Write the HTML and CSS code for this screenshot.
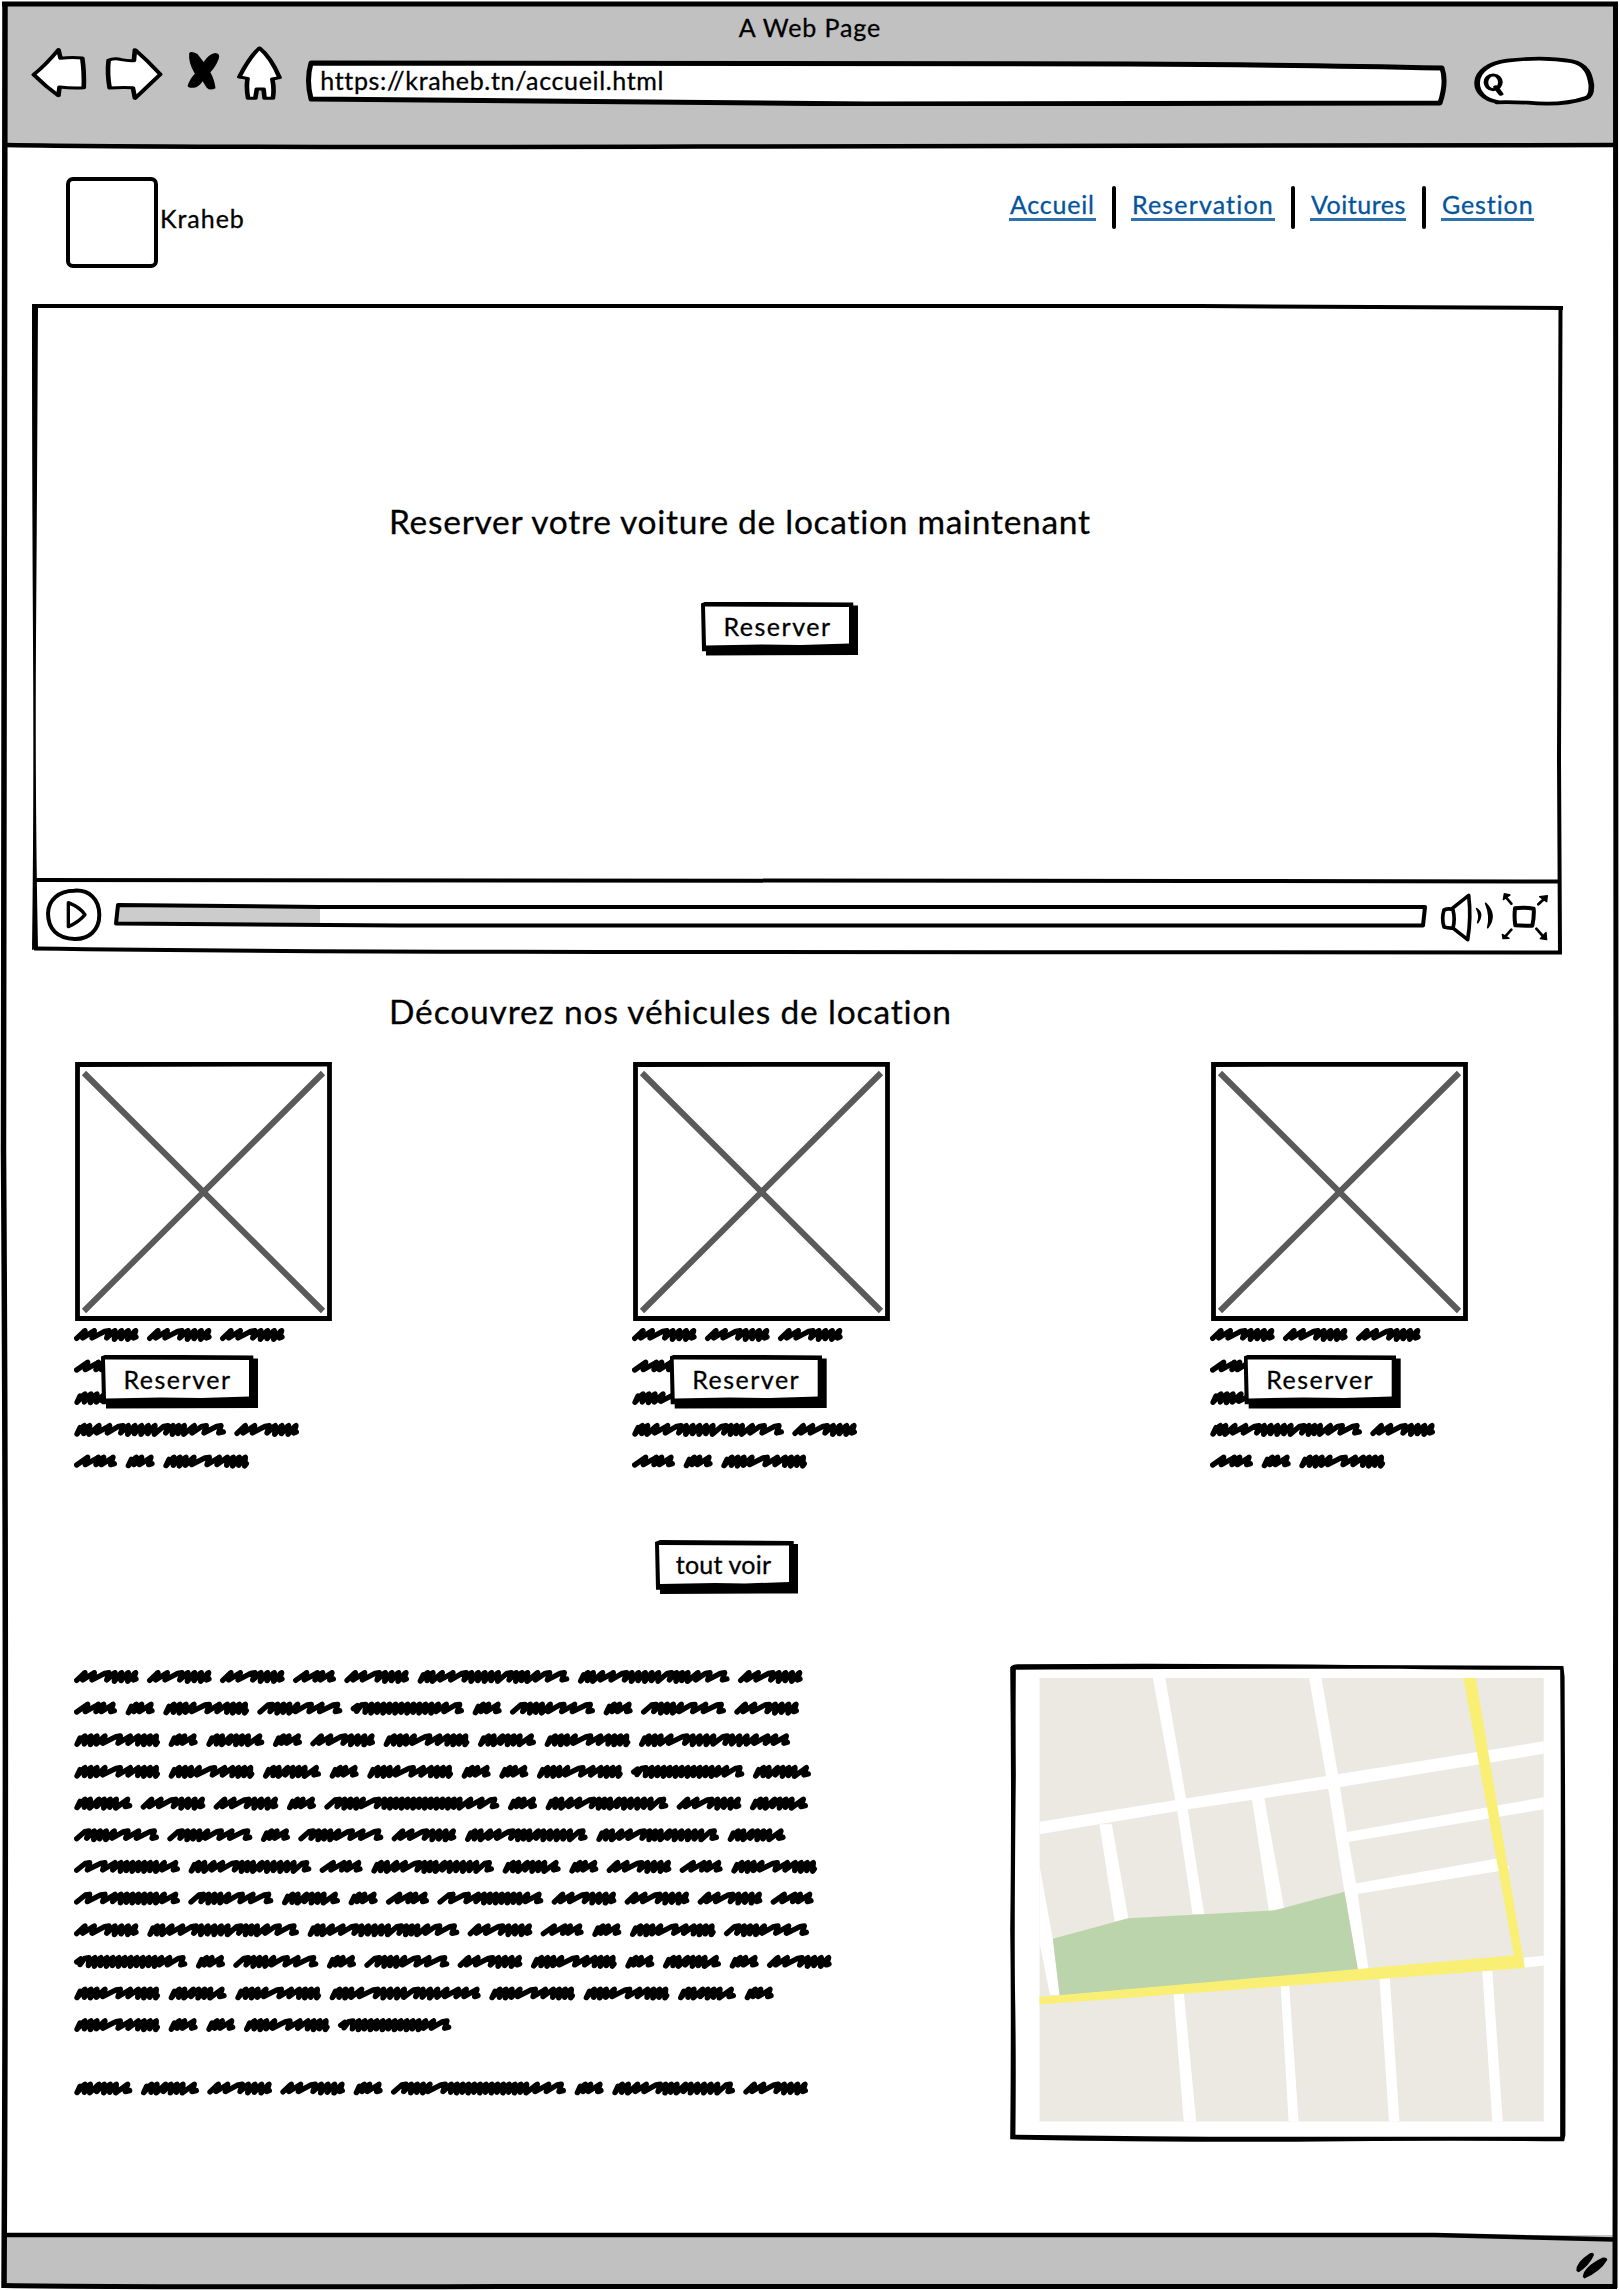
FILE: index.html
```html
<!DOCTYPE html>
<html lang="fr">
<head>
<meta charset="utf-8">
<title>A Web Page</title>
<link rel="stylesheet" href="styles.css">
</head>
<body>
<div class="browser">
  <header class="toolbar">
    <div class="window-title"><span class="t-title">A Web Page</span></div>
    <div class="tools">
      <svg class="nav-icons" viewBox="55 130 500 180" preserveAspectRatio="none">
        <g fill="#fff" stroke="#000" stroke-width="9" stroke-linejoin="round">
          <path d="M66 225Q90 195 114 150L118 176Q140 171 160 175Q164 215 163 264Q140 266 116 262L114 288Q90 262 66 225Z"/>
          <path d="M211 182Q222 174 236 180Q248 184 260 183L262 150Q286 182 311 224Q290 255 262 296L258 264Q236 262 213 265Q208 220 211 182Z"/>
          <path d="M503 145Q525 172 542 234L528 238Q532 268 529 296L513 296L511 268L498 268L495 296L481 296Q477 262 480 236L464 232Q484 172 503 145Z"/>
        </g>
        <path d="M367 160Q371 152 383 163L395 187Q405 163 417 160Q428 160 424 178Q419 200 408 218Q416 240 418 266Q407 274 401 264L393 245Q385 264 376 264Q365 266 364 258Q368 238 378 222Q365 190 367 160Z"/>
      </svg>
      <div class="address">
        <svg class="outline" viewBox="0 0 1138 46" preserveAspectRatio="none"><path d="M5 3Q300 2 820 4Q1000 5 1133 8Q1138 22 1131 43Q900 44 560 44Q280 42 5 39Q0 20 5 3Z" fill="#fff" stroke="#000" stroke-width="5" stroke-linejoin="round"/></svg>
        <span class="t-url">https://kraheb.tn/accueil.html</span>
      </div>
      <svg class="search" viewBox="1284 166 240 156" preserveAspectRatio="none">
        <path d="M1330 306C1305 300 1291 275 1292 248C1293 215 1315 190 1350 183Q1420 170 1475 185C1505 195 1510 225 1513 255Q1514 290 1503 295C1470 312 1435 316 1390 309Q1350 306 1330 308" fill="#fff" stroke="#000" stroke-width="11" stroke-linecap="round"/>
        <ellipse cx="1323" cy="248" rx="14" ry="22" fill="none" stroke="#000" stroke-width="9"/>
        <path d="M1328 262L1338 283" stroke="#000" stroke-width="10" stroke-linecap="round"/>
      </svg>
    </div>
  </header>

  <main>
    <div class="site-header">
      <div class="logo"></div>
      <span class="brand">Kraheb</span>
      <nav>
        <a class="n1">Accueil</a><i></i><a class="n2">Reservation</a><i></i><a class="n3">Voitures</a><i></i><a class="n4">Gestion</a>
      </nav>
    </div>

    <section class="video">
      <svg class="outline" viewBox="32 303 1532 652">
        <g fill="none" stroke="#000" stroke-width="4">
          <path d="M32 306Q700 304.500 1200 306L1563 308"/>
          <path d="M1560.500 307Q1560 600 1559 760L1560 952"/>
          <path d="M33 880Q700 878 1200 881L1560 881.500"/>
          <path d="M34 948.500Q300 952 700 952L1562 952.500"/>
        </g>
        <path d="M32 306L38 306Q37 500 36 640Q35 800 38 948L32 950Q34 800 33 640Q32 480 32 306Z"/>
      </svg>
      <div class="screen">
        <h1>Reserver votre voiture de location maintenant</h1>
        <button class="btn"><span>Reserver</span></button>
      </div>
      <div class="controls">
        <svg class="play" viewBox="130 76 180 172"><path d="M220 90C265 86 296 115 296 163C296 208 265 236 222 235C170 234 142 205 142 158C143 118 175 90 220 90Z" fill="none" stroke="#000" stroke-width="12"/><path d="M203 126Q238 140 253 162Q235 184 203 198Z" fill="none" stroke="#000" stroke-width="10" stroke-linejoin="round"/></svg>
        <svg class="track" viewBox="114 901 1314 28"><path d="M117 905L320 907V922L116 922Z" fill="#ccc"/><path d="M118 904Q200 905 320 906H1425L1423 924.500H400Q260 923 116 922.500Z" fill="none" stroke="#000" stroke-width="4" stroke-linejoin="round"/></svg>
        <svg class="av" viewBox="176 90 336 156" fill="none" stroke="#000" stroke-linecap="round" stroke-linejoin="round">
          <path d="M191 147Q206 140 218 147Q225 174 218 201Q204 202 191 198Q183 172 191 147ZM216 142L265 103Q273 170 262 236L216 200" stroke-width="11"/>
          <path d="M289 143Q311 158 292 185Q301 164 289 143ZM316 127Q351 162 322 200Q332 165 316 127Z" fill="#000" stroke-width="5"/>
          <path d="M404 142Q430 138 460 143Q462 165 456 194Q430 195 405 193Q401 168 404 142Z" stroke-width="12"/>
          <path d="M376 108L393 128M474 130L492 113M393 206L375 226M468 203L490 228" stroke-width="8"/>
          <path d="M372 98L389 102L369 116ZM478 107L501 104L499 122ZM366 220L386 232L368 233ZM497 214L499 236L480 233Z" fill="#000" stroke-width="4"/>
        </svg>
      </div>
    </section>

    <h2>Découvrez nos véhicules de location</h2>

    <section class="cars">
      <article><svg class="photo" viewBox="0 0 257 259"><path d="M9 11L248 249M248 11L9 249" stroke="#5a5a5a" stroke-width="6"/><path d="M2.500 2.500L254.500 2V256.500H2.500Z" fill="none" stroke="#000" stroke-width="4.800"/></svg><svg class="scribble" data-rows="AAA|BD|E|CA|BDE"></svg><button class="btn b1"><span>Reserver</span></button></article>
      <article><svg class="photo" viewBox="0 0 257 259"><path d="M9 11L248 249M248 11L9 249" stroke="#5a5a5a" stroke-width="6"/><path d="M2.500 2.500L254.500 2V256.500H2.500Z" fill="none" stroke="#000" stroke-width="4.800"/></svg><svg class="scribble" data-rows="AAA|BD|E|CA|BDE"></svg><button class="btn b2"><span>Reserver</span></button></article>
      <article><svg class="photo" viewBox="0 0 257 259"><path d="M9 11L248 249M248 11L9 249" stroke="#5a5a5a" stroke-width="6"/><path d="M2.500 2.500L254.500 2V256.500H2.500Z" fill="none" stroke="#000" stroke-width="4.800"/></svg><svg class="scribble" data-rows="AAA|BD|E|CA|BDE"></svg><button class="btn b3"><span>Reserver</span></button></article>
    </section>

    <button class="btn all"><span>tout voir</span></button>

    <section class="about">
      <svg class="scribble" data-rows="AAABACCA|BDEFGDFDFA|EDHDAEHEI|EEHDEDDEGH|HAADJDKAH|FFDFAKKH|LKBKHDABE|LFHDBLAAAB|ACCABDEF|GDFDFAEDHDA|EHEIEEHD|EDDEG||HHAADJDKA"></svg>
      <svg class="map" viewBox="48 56 1388 1158" preserveAspectRatio="none">
        <path d="M124 92H1379V1162H124Z" fill="#ebe9e1"/>
        <g fill="#fff">
          <path d="M124 439L1379 245V275L873 355L494 409L124 469Z"/>
          <path d="M406 92H437L488 379L534 662H505L468 420Z"/>
          <path d="M795 92H826L866 320L894 490L912 588L943 794H916L883 608L842 355Z"/>
          <path d="M273 445H304L345 672L311 680Z"/>
          <path d="M652 380H683L733 648L695 654Z"/>
          <path d="M890 464L1379 380V409L892 488Z"/>
          <path d="M910 588L1260 528L1292 546V554L915 613Z"/>
          <path d="M124 546L157 721L174 857H150L124 730Z"/>
          <path d="M1330 767L1379 762V786L1330 791Z"/>
          <path d="M457 850H483L514 1162H483Z"/>
          <path d="M724 830H745L769 1162H744Z"/>
          <path d="M970 815H996L1020 1162H994Z"/>
          <path d="M1226 798H1251L1277 1162H1251Z"/>
        </g>
        <path d="M157 721L345 672L707 653L883 608L917 797L174 858Z" fill="#bcd4ac"/>
        <path d="M1179 92H1210L1332 792L124 880V862L1305 761Z" fill="#faef75"/>
        <path d="M51 66Q56 59 70 59Q500 56 900 61L1428 63L1431 90Q1434 700 1433 1195L1430 1210Q1100 1207 760 1211Q300 1211 51 1205Q54 900 51 700Q55 400 51 66ZM65 72Q64 200 65 325Q61 700 63 850Q66 1000 64 1194Q500 1200 900 1199L1420 1199V850Q1423 400 1420 72Q1200 73 1020 70Q500 69 65 72Z" fill-rule="evenodd"/>
      </svg>
    </section>
  </main>

  <footer>
    <svg class="resize" viewBox="1456 1470 90 74" preserveAspectRatio="none"><path d="M1462 1520Q1460 1500 1496 1478Q1505 1474 1506 1482Q1494 1508 1468 1523ZM1478 1534Q1480 1510 1528 1488Q1540 1487 1539 1494Q1522 1522 1482 1538Z"/></svg>
  </footer>

  <svg class="frame" viewBox="0 0 1620 2290" fill="none" stroke="#000">
    <path d="M2 4H1618" stroke-width="5"/>
    <path d="M5 145Q200 148 700 146.500L1614 145" stroke-width="4.500"/>
    <path d="M5 2Q2 700 3.500 1150Q7 1700 4 2288" stroke-width="5.500"/>
    <path d="M1615.500 2Q1614 600 1616 1150Q1617 1800 1615 2288" stroke-width="5"/>
    <path d="M5 2235Q700 2232 1435 2235L1614 2239.500" stroke-width="4.500"/>
    <path d="M4 2285.500Q150 2287.500 500 2286.500H1617" stroke-width="5"/>
  </svg>
</div>

<script src="scribble.js"></script>
</body>
</html>
```
FILE: styles.css
```css
* { box-sizing: border-box; }
body {
  margin: 0;
  background: #fff;
  color: #000;
  font: 25px/30px Lato, sans-serif;
  -webkit-text-stroke: .3px currentColor;
  font-variant-ligatures: none;
}
svg { display: block; }
.browser {
  position: relative;
  width: 1620px;
  height: 2290px;
  display: flex;
  flex-direction: column;
  overflow: hidden;
}
.frame { position: absolute; inset: 0; width: 1620px; height: 2290px; pointer-events: none; }
.outline { position: absolute; inset: 0; width: 100%; height: 100%; z-index: -1; }

.toolbar { height: 144px; background: #c1c1c1; margin: 2px 4px 0; }
.window-title { padding-top: 10px; text-align: center; height: 43px; white-space: nowrap; letter-spacing: .900px; }
.tools { display: flex; align-items: flex-start; padding-left: 24px; }
.nav-icons { width: 258.300px; height: 60px; margin-top: -2px; overflow: visible; }
.address {
  position: relative;
  z-index: 0;
  width: 1141px;
  height: 46px;
  margin: 15px 0 0 20px;
  padding: 5px 0 0 14px;
  white-space: nowrap;
  letter-spacing: .650px;
}
.search { width: 124px; height: 52px; margin: 10px 0 0 25.700px; }

main { flex: none; height: 2089px; display: flex; flex-direction: column; }
.site-header { height: 157px; display: flex; align-items: flex-start; padding: 31px 0 0 66px; }
.logo { width: 92px; height: 91px; border: 4px solid #000; border-radius: 7px; background: #fff; }
.brand { margin: 26px 0 0 2px; width: 201px; letter-spacing: .950px; }
nav { display: flex; margin-left: 649px; padding-top: 9px; }
nav a { color: #04549c; height: 34px; margin-top: 3px; position: relative; white-space: nowrap; }
nav a::after { content: ""; position: absolute; left: -1px; right: -1px; top: 29px; height: 2.500px; background: #2c72b0; }
nav i { width: 4px; height: 43px; border-radius: 2px; background: #000; margin: 0 16.500px; }
.n1 { width: 85px; letter-spacing: .750px; }
.n2 { width: 142px; letter-spacing: 1.150px; }
.n3 { width: 94px; letter-spacing: .500px; }
.n4 { width: 91px; letter-spacing: .900px; }

.video { position: relative; z-index: 0; width: 1532px; height: 652px; margin-left: 32px; flex: none; }
.screen { height: 576px; padding: 198px 0 0 357px; }
h1, h2 { margin: 0; font-size: 33.500px; line-height: 40px; font-weight: 400; white-space: nowrap; letter-spacing: .720px; }
.screen .btn { margin: 60.500px 0 0 312px; }
.controls { display: flex; align-items: center; height: 74px; padding-left: 12px; }
.play { width: 60px; height: 57.300px; margin-top: -3px; }
.track { width: 1314px; height: 28px; margin: -1px 0 0 10px; }
.av { width: 112px; height: 52px; margin: 1px 0 0 10.700px; }

h2 { margin: 36px 0 0 389px; letter-spacing: .850px; }

.btn {
  display: block;
  flex: none;
  position: relative;
  z-index: 0;
  width: 157px;
  height: 54px;
  padding: 0;
  border: 0;
  font: inherit;
  letter-spacing: 1.500px;
  -webkit-text-stroke: inherit;
  color: #000;
  text-align: center;
  background: #000;
  clip-path: polygon(0 2px, 5px 0, 97% 1px, 97% 4px, 100% 4px, 100% 99%, 5px 100%, 5px 92%, 1px 92%);
}
.btn::before {
  content: "";
  position: absolute;
  inset: 0;
  background: #fff;
  z-index: -1;
  clip-path: polygon(4px 5px, 148px 5.500px, 148px 42px, 100px 43.500px, 60px 43px, 5px 44px);
}
.btn span { display: block; padding: 0 4px 6px 0; white-space: nowrap; }

.cars { display: flex; padding: 31px 0 0 75px; height: 450px; flex: none; }
.cars article { width: 257px; margin-right: 300.700px; flex: none; }
.cars article + article { margin-right: 321px; }
.cars article:last-child { margin-right: 0; }
.photo { width: 257px; height: 259px; }
.scribble { fill: none; stroke: #000; stroke-linecap: round; stroke-linejoin: round; margin: 7px 0 0 -1px; width: 240px; height: 145px; }
.cars .btn { margin-top: -118.500px; margin-left: 26px; }
.cars .b2 { margin-left: 37px; }
.cars .b3 { margin-left: 33px; }

.all { width: 143px; margin: 59px 0 0 655px; letter-spacing: .200px; }
.all::before { clip-path: polygon(4px 5px, 134px 5.500px, 134px 42px, 90px 43.500px, 60px 43px, 5px 44px); }
.all span { padding-right: 6px; }

.about { display: flex; margin-top: 69px; }
.about .scribble { width: 770px; height: 440px; margin: 6.500px 0 0 74px; }
.map { width: 557.600px; height: 480px; margin-left: 165px; }

footer { margin: 0 4px; height: 53px; background: #c1c1c1; display: flex; justify-content: flex-end; }
.resize { width: 36px; height: 31px; margin: 15px 6px 0 0; }
```
FILE: scribble.js
```js
// Placeholder words: overall width, start style, then the crest positions of the pen stroke.
// A pair [from, to] is a run of tight, overlapping crests.
const WORDS = {
  A: [194, 0, 34, 62, 106, [124, 164], 186],
  B: [129, 0, 42, 74, 90, 118],
  C: [456, 1, [32, 48], 76, 108, 148, [164, 244], 283, [298, 332], 362, 398, 442],
  D: [88, 1, 34, 50, 78],
  E: [258, 1, [34, 70], 94, 140, 170, [194, 248]],
  F: [255, 0, 46, [62, 98], 122, 163, 195, 242],
  G: [340, 2, [46, 244], 264, 288, 328],
  H: [175, 1, [34, 50], 76, [92, 128], 162],
  I: [454, 1, [32, 68], 98, 146, [164, 226], 267, [282, 326], 354, 388, 412, 444],
  J: [525, 0, 46, [62, 98], 118, 164, [182, 408], 440, 474, 512],
  K: [369, 1, [32, 50], 78, 104, 146, [162, 196], 222, [238, 318], 356],
  L: [318, 0, 48, 94, 124, [142, 248], 272, 306]
};
const STARTS = ['M8 31', 'M18 14L9 33', 'M8 21L20 12L18 29'];

function wordPath(name) {
  const [width, start, ...crests] = WORDS[name];
  const peaks = crests.flatMap(c => {
    if (!Array.isArray(c)) return [[c, false]];
    const n = Math.max(1, Math.round((c[1] - c[0]) / 18));
    return Array.from({ length: n + 1 }, (_, i) => [c[0] + (c[1] - c[0]) * i / n, true]);
  });
  let d = STARTS[start];
  let last = 10;
  peaks.forEach(([x, tight], i) => {
    const bottom = tight ? 32 + (i % 2) * 2 : 30;
    const shoulder = x - last > 34 ? 14 : 4;
    const drop = tight ? 3 : 8;
    d += `L${x - shoulder} 10L${x - 1} 8L${x - drop} ${bottom}`;
    last = x;
  });
  return d + `L${width - 8} 27`;
}

document.querySelectorAll('.scribble').forEach(svg => {
  svg.innerHTML = svg.dataset.rows.split('|').map((row, r) => {
    let x = 0;
    return [...row].map(name => {
      const path = `<path stroke-width="16" transform="translate(${x / 3} ${r * 31.66}) scale(.33333)" d="${wordPath(name)}"/>`;
      x += WORDS[name][0] + 25;
      return path;
    }).join('');
  }).join('');
});
```
